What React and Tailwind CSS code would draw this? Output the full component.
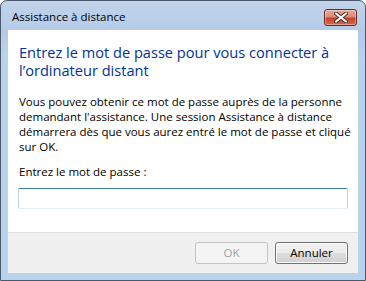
import React from 'react';

const ui = { fontFamily: '"Open Sans", "Noto Sans", "Liberation Sans", sans-serif' };

function CloseButton() {
  return (
    <div className="mt-[8px] mr-[8px] flex h-[17px] w-[33px] items-center justify-center rounded-[3px] border border-[#6e2b22] bg-[linear-gradient(#e9a999_0%,#dc8a78_45%,#c5452f_55%,#d26a4f_100%)] shadow-[inset_0_0_0_1px_rgba(255,255,255,0.35)]">
      <svg width="14" height="11" viewBox="0 0 14 11">
        <path d="M2 1.5 L12 9.5 M12 1.5 L2 9.5" stroke="#4b2a25" strokeWidth="4" strokeLinecap="round" />
        <path d="M2 1.5 L12 9.5 M12 1.5 L2 9.5" stroke="#ffffff" strokeWidth="2.2" strokeLinecap="round" />
      </svg>
    </div>
  );
}

export default function App() {
  return (
    <div className="h-[281px] w-[366px] bg-white" style={ui}>
      <div className="flex h-full flex-col rounded-t-[7px] border border-[#4a5a6c] bg-[linear-gradient(#c2d3ea_0px,#b4cbe8_30px,#bad3ec_60px,#bad3ec_100%)]">
        {/* title bar */}
        <div className="flex h-[29px] shrink-0 items-start justify-between">
          <div className="pl-[11px] pt-[8px] text-[11.5px] leading-[16px] text-black">Assistance à distance</div>
          <CloseButton />
        </div>

        {/* client area */}
        <div className="mx-[7px] mb-[7px] flex flex-1 flex-col bg-white">
          <div className="flex-1 px-[10px]">
            <div className="pl-[1px] pt-[13px] text-[14.6px] leading-[18px] text-[#003399]">
              <div className="whitespace-nowrap">Entrez le mot de passe pour vous connecter à</div>
              <div className="whitespace-nowrap">l’ordinateur distant</div>
            </div>
            <div className="mt-[15px] pl-[1px] text-[11.5px] leading-[15px] text-black">
              <div className="whitespace-nowrap">Vous pouvez obtenir ce mot de passe auprès de la personne</div>
              <div className="whitespace-nowrap">demandant l'assistance. Une session Assistance à distance</div>
              <div className="whitespace-nowrap">démarrera dès que vous aurez entré le mot de passe et cliqué</div>
              <div className="whitespace-nowrap">sur OK.</div>
            </div>
            <div className="mt-[10px] pl-[1px] text-[11.5px] leading-[15px] text-black">Entrez le mot de passe :</div>
            <input
              type="password"
              className="mt-[9px] block h-[21px] w-[330px] rounded-[2px] border border-[#b7d3ea] border-t-[#3d7bad] border-b-[#e3eef7] bg-white px-1 text-[12px] outline-none"
            />
          </div>

          <div className="flex h-[41px] shrink-0 justify-end gap-[7px] border-t border-[#dfdfdf] bg-[#f0f0f0] pr-[10px] pt-[9px]">
            <button className="h-[22px] w-[73px] rounded-[3px] border border-[#c4c4c4] bg-[#f4f4f4] text-[11.5px] text-[#a0a0a0]">
              OK
            </button>
            <button className="h-[22px] w-[73px] rounded-[3px] border border-[#707070] bg-[linear-gradient(#f2f2f2_0%,#ebebeb_50%,#dddddd_51%,#cfcfcf_100%)] text-[11.5px] text-black shadow-[inset_0_0_0_1px_#fcfcfc]">
              Annuler
            </button>
          </div>
        </div>
      </div>
    </div>
  );
}
